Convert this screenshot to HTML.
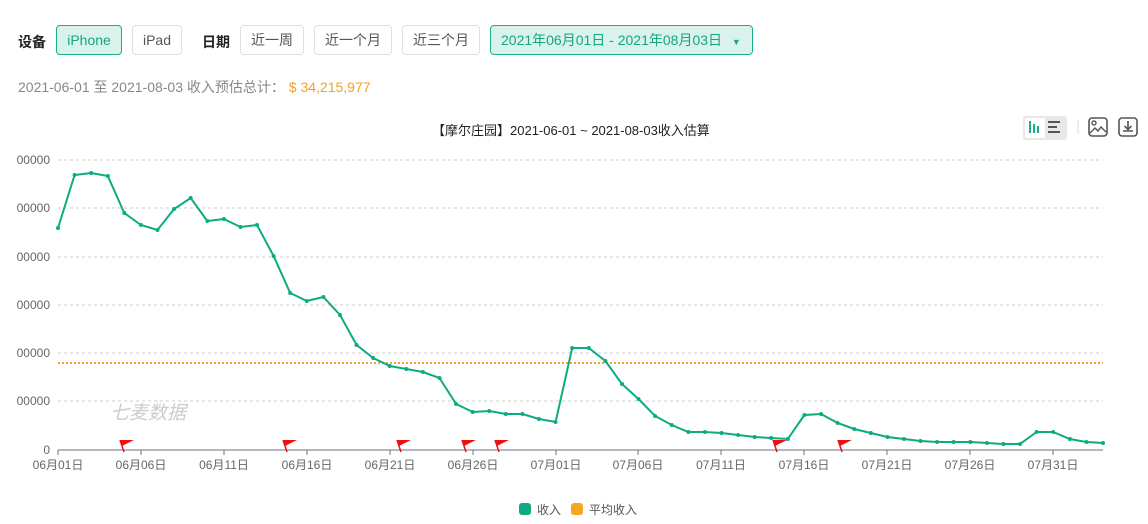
<!DOCTYPE html>
<html><head><meta charset="utf-8"><style>
*{margin:0;padding:0;box-sizing:border-box}
body{width:1148px;height:524px;background:#fff;font-family:"Liberation Sans","Noto Sans CJK SC",sans-serif;position:relative;overflow:hidden;color:#333}
.lbl{position:absolute;top:32px;font-size:14px;font-weight:bold;color:#222}
.btn{position:absolute;top:25px;height:30px;border:1px solid #dcdfe6;border-radius:4px;font-size:14px;color:#555;line-height:28px;text-align:center;background:#fff}
.on{background:#d9f3ec;border-color:#1aaf8b;color:#13a67f}
.sum{position:absolute;left:18px;top:77px;font-size:14px;color:#888}
.sum span{color:#f5a020}
.title{position:absolute;left:432px;top:120px;font-size:13px;color:#222}
</style></head><body>
<div class="lbl" style="left:18px">设备</div>
<div class="btn on" style="left:56px;width:66px">iPhone</div>
<div class="btn" style="left:132px;width:50px">iPad</div>
<div class="lbl" style="left:202px">日期</div>
<div class="btn" style="left:240px;width:64px">近一周</div>
<div class="btn" style="left:314px;width:78px">近一个月</div>
<div class="btn" style="left:402px;width:78px">近三个月</div>
<div class="btn on" style="left:490px;width:263px;text-align:left;padding-left:10px">2021年06月01日 - 2021年08月03日 <span style="font-size:9px;margin-left:6px">▼</span></div>
<div class="sum">2021-06-01 至 2021-08-03 收入预估总计： <span>$ 34,215,977</span></div>
<div class="title">【摩尔庄园】2021-06-01 ~ 2021-08-03收入估算</div>
<svg width="1148" height="524" style="position:absolute;left:0;top:0">
<defs><marker id="d" markerWidth="4" markerHeight="4" refX="2" refY="2" markerUnits="userSpaceOnUse"><circle cx="2" cy="2" r="2" fill="#0eaa82"/></marker>
<g id="f"><path d="M0 0 L4 12" stroke="#e11" stroke-width="1.5"/><path d="M0 0 L14 0 L6 4 L2 6 Z" fill="#e11"/></g></defs>
<rect x="1023" y="116" width="44" height="24" rx="3" fill="#e8e8e8"/>
<rect x="1025" y="118" width="20" height="20" rx="2" fill="#fff"/>
<g stroke="#1aaf8b" stroke-width="2"><path d="M1030 121v12M1034 124v9M1038 126v7"/></g>
<g stroke="#555" stroke-width="2"><path d="M1048 122h12M1048 127h9M1048 132h12"/></g>
<path d="M1078 120v14" stroke="#ddd"/>
<rect x="1089" y="118" width="18" height="18" rx="3" fill="none" stroke="#555" stroke-width="1.6"/>
<circle cx="1094" cy="123" r="2" fill="none" stroke="#555" stroke-width="1.4"/>
<path d="M1090 133l5-5 3 3 3-4 5 5" fill="none" stroke="#555" stroke-width="1.4"/>
<rect x="1119" y="118" width="18" height="18" rx="3" fill="none" stroke="#555" stroke-width="1.6"/>
<path d="M1128 121v8M1124.5 126l3.5 3.5 3.5-3.5M1123 131h10" fill="none" stroke="#555" stroke-width="1.6"/>
<g stroke="#ccc" stroke-dasharray="3,3"><path d="M58 160H1103M58 208H1103M58 257H1103M58 305H1103M58 353H1103M58 401H1103"/></g>
<g font-size="12" fill="#666" text-anchor="end"><text x="50" y="164">00000</text><text x="50" y="212">00000</text><text x="50" y="261">00000</text><text x="50" y="309">00000</text><text x="50" y="357">00000</text><text x="50" y="405">00000</text><text x="50" y="454">0</text></g>
<path d="M58 450H1103" stroke="#6e7079"/>
<g stroke="#6e7079"><path d="M58 450v5M141 450v5M224 450v5M307 450v5M390 450v5M473 450v5M556 450v5M638 450v5M721 450v5M804 450v5M887 450v5M970 450v5M1053 450v5"/></g>
<g font-size="12" fill="#666" text-anchor="middle"><text x="58" y="469">06月01日</text><text x="141" y="469">06月06日</text><text x="224" y="469">06月11日</text><text x="307" y="469">06月16日</text><text x="390" y="469">06月21日</text><text x="473" y="469">06月26日</text><text x="556" y="469">07月01日</text><text x="638" y="469">07月06日</text><text x="721" y="469">07月11日</text><text x="804" y="469">07月16日</text><text x="887" y="469">07月21日</text><text x="970" y="469">07月26日</text><text x="1053" y="469">07月31日</text></g>
<text x="110" y="419" font-size="19" font-style="italic" fill="#ccc">七麦数据</text>
<path d="M58 363H1103" stroke="#f5a623" stroke-width="2" stroke-dasharray="2,2"/>
<polyline fill="none" stroke="#0eaa82" stroke-width="2" marker-start="url(#d)" marker-mid="url(#d)" marker-end="url(#d)" points="58,228 74.6,175 91.2,173 107.8,176 124.3,213 140.9,225 157.5,230 174.1,209 190.7,198 207.3,221 223.9,219 240.5,227 257,225 273.6,256 290.2,293 306.8,301 323.4,297 340,315 356.6,345 373.2,358 389.7,366 406.3,369 422.9,372 439.5,378 456.1,404 472.7,412 489.3,411 505.8,414 522.4,414 539,419 555.6,422 572.2,348 588.8,348 605.4,361 622,384 638.5,399 655.1,416 671.7,425 688.3,432 704.9,432 721.5,433 738.1,435 754.7,437 771.2,438 787.8,439 804.4,415 821,414 837.6,423 854.2,429 870.8,433 887.4,437 903.9,439 920.5,441 937.1,442 953.7,442 970.3,442 986.9,443 1003.5,444 1020,444 1036.6,432 1053.2,432 1069.8,439 1086.4,442 1103,443"/>
<use href="#f" x="120" y="440"/><use href="#f" x="283" y="440"/><use href="#f" x="397" y="440"/><use href="#f" x="462" y="440"/><use href="#f" x="495" y="440"/><use href="#f" x="773" y="440"/><use href="#f" x="838" y="440"/>
<rect x="519" y="503" width="12" height="12" rx="3" fill="#0eaa82"/>
<text x="537" y="514" font-size="12" fill="#555">收入</text>
<rect x="571" y="503" width="12" height="12" rx="3" fill="#f5a623"/>
<text x="589" y="514" font-size="12" fill="#555">平均收入</text>
</svg>
</body></html>
